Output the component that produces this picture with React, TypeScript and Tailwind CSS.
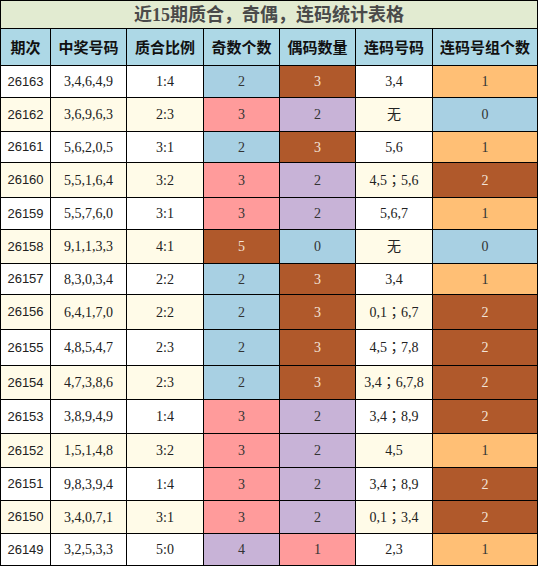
type Row = {
	id: string;
	nums: string;
	ratio: string;
	odd: [string, string];
	even: [string, string];
	seq: string;
	cnt: [string, string];
	h: number;
};

const BLUE = "blue";
const PINK = "pink";
const PURPLE = "purple";
const BROWN = "brown";
const ORANGE = "orange";

const colorClass: Record<string, string> = {
	blue: "bg-[#a8d0e3] text-[#333]",
	pink: "bg-[#ff9b9b] text-[#333]",
	purple: "bg-[#c8b3d7] text-[#333]",
	brown: "bg-[#b0592b] text-[#f3e4d8]",
	orange: "bg-[#ffbf75] text-[#333]",
};

const rows: Row[] = [
	{ id: "26163", nums: "3,4,6,4,9", ratio: "1:4", odd: ["2", BLUE], even: ["3", BROWN], seq: "3,4", cnt: ["1", ORANGE], h: 32 },
	{ id: "26162", nums: "3,6,9,6,3", ratio: "2:3", odd: ["3", PINK], even: ["2", PURPLE], seq: "无", cnt: ["0", BLUE], h: 34 },
	{ id: "26161", nums: "5,6,2,0,5", ratio: "3:1", odd: ["2", BLUE], even: ["3", BROWN], seq: "5,6", cnt: ["1", ORANGE], h: 31 },
	{ id: "26160", nums: "5,5,1,6,4", ratio: "3:2", odd: ["3", PINK], even: ["2", PURPLE], seq: "4,5；5,6", cnt: ["2", BROWN], h: 35 },
	{ id: "26159", nums: "5,5,7,6,0", ratio: "3:1", odd: ["3", PINK], even: ["2", PURPLE], seq: "5,6,7", cnt: ["1", ORANGE], h: 32 },
	{ id: "26158", nums: "9,1,1,3,3", ratio: "4:1", odd: ["5", BROWN], even: ["0", BLUE], seq: "无", cnt: ["0", BLUE], h: 34 },
	{ id: "26157", nums: "8,3,0,3,4", ratio: "2:2", odd: ["2", BLUE], even: ["3", BROWN], seq: "3,4", cnt: ["1", ORANGE], h: 31 },
	{ id: "26156", nums: "6,4,1,7,0", ratio: "2:2", odd: ["2", BLUE], even: ["3", BROWN], seq: "0,1；6,7", cnt: ["2", BROWN], h: 35 },
	{ id: "26155", nums: "4,8,5,4,7", ratio: "2:3", odd: ["2", BLUE], even: ["3", BROWN], seq: "4,5；7,8", cnt: ["2", BROWN], h: 36 },
	{ id: "26154", nums: "4,7,3,8,6", ratio: "2:3", odd: ["2", BLUE], even: ["3", BROWN], seq: "3,4；6,7,8", cnt: ["2", BROWN], h: 34 },
	{ id: "26153", nums: "3,8,9,4,9", ratio: "1:4", odd: ["3", PINK], even: ["2", PURPLE], seq: "3,4；8,9", cnt: ["2", BROWN], h: 34 },
	{ id: "26152", nums: "1,5,1,4,8", ratio: "3:2", odd: ["3", PINK], even: ["2", PURPLE], seq: "4,5", cnt: ["1", ORANGE], h: 34 },
	{ id: "26151", nums: "9,8,3,9,4", ratio: "1:4", odd: ["3", PINK], even: ["2", PURPLE], seq: "3,4；8,9", cnt: ["2", BROWN], h: 33 },
	{ id: "26150", nums: "3,4,0,7,1", ratio: "3:1", odd: ["3", PINK], even: ["2", PURPLE], seq: "0,1；3,4", cnt: ["2", BROWN], h: 33 },
	{ id: "26149", nums: "3,2,5,3,3", ratio: "5:0", odd: ["4", PURPLE], even: ["1", PINK], seq: "2,3", cnt: ["1", ORANGE], h: 32 },
];

const headers = ["期次", "中奖号码", "质合比例", "奇数个数", "偶码数量", "连码号码", "连码号组个数"];
const widths = ["w-[50px]", "w-[76px]", "w-[77px]", "w-[76px]", "w-[76px]", "w-[77px]", "w-[105px]"];

export default function App() {
	return (
		<div className="w-[538px] bg-white">
			<table className="w-[538px] table-fixed border-collapse border border-black font-['Liberation_Serif','Noto_Sans_CJK_SC',serif] text-[14px] text-[#222]">
				<colgroup>
					{widths.map((w, i) => (
						<col key={i} className={w} />
					))}
				</colgroup>
				<thead>
					<tr className="h-[28px]">
						<th
							colSpan={7}
							className="border border-black bg-[#e2ebd1] p-0 text-center text-[18px] font-bold text-[#4a4a4a] font-['Liberation_Serif','Noto_Sans_CJK_SC',serif] leading-none"
						>
							近15期质合，奇偶，连码统计表格
						</th>
					</tr>
					<tr className="h-[37px]">
						{headers.map((h) => (
							<th
								key={h}
								className="border border-black bg-[#add8e6] p-0 text-center text-[15px] font-bold text-[#111] font-['Noto_Sans_CJK_SC',sans-serif]"
							>
								{h}
							</th>
						))}
					</tr>
				</thead>
				<tbody>
					{rows.map((r, i) => {
						const bg = i % 2 === 0 ? "bg-white" : "bg-[#fffbe8]";
						return (
							<tr key={r.id} className={bg} style={{ height: r.h }}>
								<td className="border border-black p-0 text-center font-['Liberation_Sans',sans-serif] text-[13px]">
									{r.id}
								</td>
								<td className="border border-black p-0 text-center">{r.nums}</td>
								<td className="border border-black p-0 text-center">{r.ratio}</td>
								<td className={`border border-black p-0 text-center ${colorClass[r.odd[1]]}`}>{r.odd[0]}</td>
								<td className={`border border-black p-0 text-center ${colorClass[r.even[1]]}`}>{r.even[0]}</td>
								<td className="border border-black p-0 text-center whitespace-nowrap font-['Liberation_Serif','Noto_Sans_CJK_TC',serif]">
									{r.seq}
								</td>
								<td className={`border border-black p-0 text-center ${colorClass[r.cnt[1]]}`}>{r.cnt[0]}</td>
							</tr>
						);
					})}
				</tbody>
			</table>
		</div>
	);
}
